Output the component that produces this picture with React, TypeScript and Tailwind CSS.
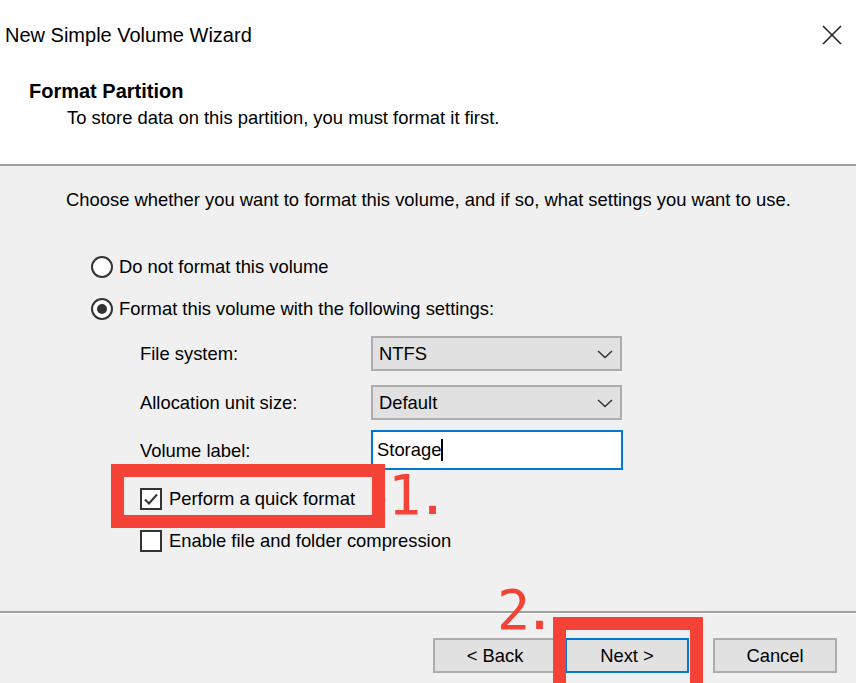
import React from "react";

const font = { fontFamily: '"Liberation Sans", Arial, sans-serif' };

function Radio({ checked }: { checked?: boolean }) {
  return (
    <span className="flex h-[22px] w-[22px] shrink-0 items-center justify-center rounded-full border-2 border-[#333333] bg-white">
      {checked && <span className="h-[10px] w-[10px] rounded-full bg-[#333333]" />}
    </span>
  );
}

function Check({ checked }: { checked?: boolean }) {
  return (
    <span className="flex h-[22px] w-[22px] shrink-0 items-center justify-center border-2 border-[#333333] bg-white">
      {checked && (
        <svg width="16" height="16" viewBox="0 0 16 16">
          <polyline points="2,8.5 6,12.5 14,3.5" fill="none" stroke="#333333" strokeWidth="2" />
        </svg>
      )}
    </span>
  );
}

function Select({ value }: { value: string }) {
  return (
    <div className="flex h-[35px] w-[251px] items-center justify-between border-2 border-[#adadad] bg-[#e1e1e1] pl-[6px] pr-[7px]">
      <span>{value}</span>
      <svg width="16" height="10" viewBox="0 0 16 10">
        <polyline points="1,2 8,8.5 15,2" fill="none" stroke="#333333" strokeWidth="1.5" />
      </svg>
    </div>
  );
}

function Btn({ label, focused }: { label: string; focused?: boolean }) {
  return (
    <div
      className={
        "flex h-[35px] w-[124px] items-center justify-center border-2 bg-[#e1e1e1] " +
        (focused ? "border-[#0078d7]" : "border-[#adadad]")
      }
    >
      {label}
    </div>
  );
}

export default function App() {
  return (
    <div
      className="relative h-[683px] w-[856px] overflow-hidden bg-white text-[18.4px] leading-[24px] text-black"
      style={font}
    >
      <div className="h-[166px] border-b-2 border-[#a0a0a0] bg-white">
        <div className="flex h-[70px] items-center justify-between pl-[5px] pr-[14px]">
          <span className="text-[20px]">New Simple Volume Wizard</span>
          <svg width="20" height="20" viewBox="0 0 20 20">
            <line x1="1" y1="1" x2="19" y2="19" stroke="#222" strokeWidth="1.6" />
            <line x1="19" y1="1" x2="1" y2="19" stroke="#222" strokeWidth="1.6" />
          </svg>
        </div>
        <div className="mt-[9px] pl-[29px] text-[20px] font-bold">Format Partition</div>
        <div className="mt-[3px] pl-[67px]">To store data on this partition, you must format it first.</div>
      </div>

      <div className="h-[445px] bg-[#f0f0f0] pl-[66px] pt-[22px]">
        <p>Choose whether you want to format this volume, and if so, what settings you want to use.</p>
        <div className="mt-[43px] flex flex-col gap-[18px] pl-[25px]">
          <div className="flex h-[24px] items-center gap-[6px]">
            <Radio />
            <span>Do not format this volume</span>
          </div>
          <div className="flex h-[24px] items-center gap-[6px]">
            <Radio checked />
            <span>Format this volume with the following settings:</span>
          </div>
        </div>
        <div className="pl-[74px]">
          <div className="mt-[15px] flex h-[35px] items-center">
            <span className="w-[231px]">File system:</span>
            <Select value="NTFS" />
          </div>
          <div className="mt-[14px] flex h-[35px] items-center">
            <span className="w-[231px]">Allocation unit size:</span>
            <Select value="Default" />
          </div>
          <div className="mt-[10px] flex h-[40px] items-center">
            <span className="w-[231px] pt-[2px]">Volume label:</span>
            <div className="flex h-[40px] w-[252px] items-center border-2 border-[#0078d7] bg-white pl-[4px]">
              <span>Storage</span>
              <span className="h-[22px] w-[2px] bg-black" />
            </div>
          </div>
          <div className="mt-[18px] flex h-[22px] items-center gap-[7px]">
            <Check checked />
            <span>Perform a quick format</span>
          </div>
          <div className="mt-[20px] flex h-[22px] items-center gap-[7px]">
            <Check />
            <span>Enable file and folder compression</span>
          </div>
        </div>
      </div>

      <div className="border-t-2 border-[#a0a0a0]">
        <div className="flex h-[70px] items-start border-t border-white bg-[#f0f0f0] pl-[433px] pt-[24px]">
          <Btn label="< Back" />
          <div className="ml-[8px]">
            <Btn label="Next >" focused />
          </div>
          <div className="ml-[24px]">
            <Btn label="Cancel" />
          </div>
        </div>
      </div>

      {/* annotations */}
      <div className="absolute left-[111px] top-[464px] h-[64px] w-[274px] border-[13px] border-[#f44336]" />
      <div
        className="absolute left-[388px] top-[468px] text-[55px] leading-[55px] tracking-[-5px] text-[#f44336]"
        style={{ fontFamily: '"DejaVu Sans Mono", monospace' }}
      >
        1.
      </div>
      <div className="absolute left-[553px] top-[617px] h-[90px] w-[150px] border-[13px] border-[#f44336]" />
      <div
        className="absolute left-[497px] top-[583px] text-[55px] leading-[55px] tracking-[-7px] text-[#f44336]"
        style={{ fontFamily: '"DejaVu Sans Mono", monospace' }}
      >
        2.
      </div>
    </div>
  );
}
